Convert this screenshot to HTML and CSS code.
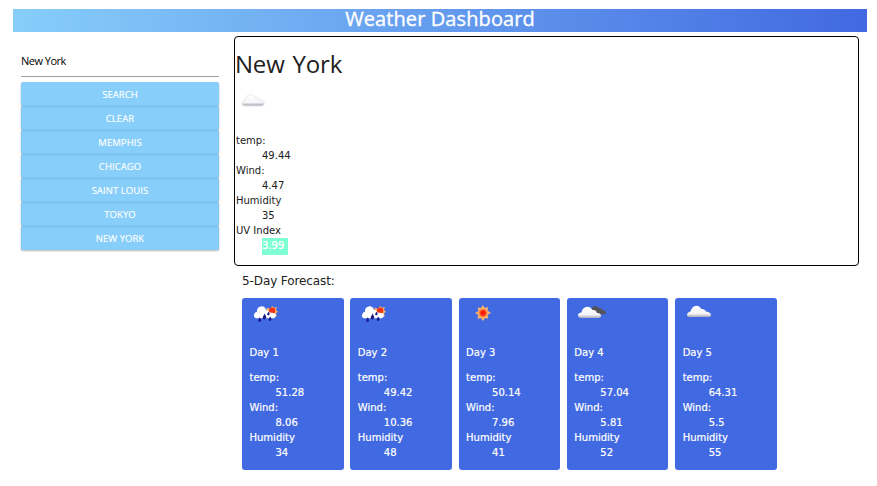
FILE: index.html
```html
<!DOCTYPE html>
<html lang="en">
<head>
<meta charset="utf-8">
<title>Weather Dashboard</title>
<link rel="stylesheet" href="styles.css">
</head>
<body>
<svg class="defs" width="0" height="0" aria-hidden="true">
  <defs>
    <linearGradient id="cloudFill" x1="0" y1="0" x2="0" y2="1">
      <stop offset="0" stop-color="#fff"/><stop offset=".7" stop-color="#f5f5fa"/><stop offset="1" stop-color="#aaa8b4"/>
    </linearGradient>
    <radialGradient id="sunFill"><stop offset=".45" stop-color="#ff1d08"/><stop offset="1" stop-color="#ffad62"/></radialGradient>
    <symbol id="cloud" viewBox="0 0 24 13">
      <path fill="url(#cloudFill)" d="M3 12Q0 12 0 10Q0 7.500 3.500 6.500Q4.500 2 8 1Q12 0 14.500 4Q18 3.500 19 6.500Q24 7 24 10Q24 12 21 12Z"/>
    </symbol>
    <symbol id="rain" viewBox="0 0 26 20">
      <path fill="#ffb267" d="m20 1 2 2 3-1-1 3 2 2-2 2 1 3-3-1-3 2-4-2-1-8 4 1z"/>
      <circle cx="20" cy="6" r="3.300" fill="#ee3518"/>
      <path fill="#fff" d="M3 14Q0 13 1 10Q2 7 4 7Q4 2 8 1.500Q12 1 13.500 5Q16 5 17 8Q22 8 24 10Q24 14 21 14Z"/>
      <g fill="#18188c"><path d="m7 13 1.500 3q-1 2.500-2.500 1.500-1.500-1 0-3zM12 9l2 4q-1 3-3 2-2-1 0-4zM18 12l1.500 3q-1 2.500-2.500 1.500-1.500-1 0-3zM16 7l1.500 2-1 2-2-1z"/></g>
    </symbol>
    <symbol id="sun" viewBox="0 0 16 16">
      <path fill="#ffb36a" d="m8 0 1.700 3L13 2l-.5 3.500L16 8l-3.500 2 .8 3.500L10 13l-2 3-2-3-3.500.8.800-3.800L0 8l3.500-2L2.700 2.500 6 3z"/>
      <circle cx="8" cy="8" r="4.500" fill="url(#sunFill)"/>
    </symbol>
    <symbol id="broken" viewBox="0 0 28 14">
      <path fill="#54545a" d="M13 6Q14 1 17 1L22 3Q24 3 24 5Q28 5 28 8Q27 10 24 9H15Z"/>
      <path fill="url(#cloudFill)" d="M3 13Q0 13 0 10Q0 8 3.500 7.500Q4 3 8 2Q12 1 14.500 5Q18 4.500 19 8Q23 8 23 11Q23 13 20 13Z"/>
    </symbol>
  </defs>
</svg>
<header class="banner"><h1>Weather Dashboard</h1></header>
<main class="layout">
  <aside class="sidebar">
    <input class="city" type="text" value="New York" aria-label="City">
    <button>SEARCH</button><button>CLEAR</button><button>MEMPHIS</button><button>CHICAGO</button><button>SAINT LOUIS</button><button>TOKYO</button><button>NEW YORK</button>
  </aside>
  <div class="content">
    <section class="current">
      <h2>New York</h2>
      <svg class="now-icon" viewBox="0 0 24 13"><use href="#cloud"/></svg>
      <dl><dt>temp:</dt><dd>49.44</dd><dt>Wind:</dt><dd>4.47</dd><dt>Humidity</dt><dd>35</dd><dt>UV Index</dt><dd><span class="uv">3.99</span></dd></dl>
    </section>
    <h3>5-Day Forecast:</h3>
    <section class="forecast">
      <article class="day"><div class="icon"><svg class="rain"><use href="#rain"/></svg></div><h4>Day 1</h4><dl><dt>temp:</dt><dd>51.28</dd><dt>Wind:</dt><dd>8.06</dd><dt>Humidity</dt><dd>34</dd></dl></article>
      <article class="day"><div class="icon"><svg class="rain"><use href="#rain"/></svg></div><h4>Day 2</h4><dl><dt>temp:</dt><dd>49.42</dd><dt>Wind:</dt><dd>10.36</dd><dt>Humidity</dt><dd>48</dd></dl></article>
      <article class="day"><div class="icon"><svg class="sun"><use href="#sun"/></svg></div><h4>Day 3</h4><dl><dt>temp:</dt><dd>50.14</dd><dt>Wind:</dt><dd>7.96</dd><dt>Humidity</dt><dd>41</dd></dl></article>
      <article class="day"><div class="icon"><svg class="broken"><use href="#broken"/></svg></div><h4>Day 4</h4><dl><dt>temp:</dt><dd>57.04</dd><dt>Wind:</dt><dd>5.81</dd><dt>Humidity</dt><dd>52</dd></dl></article>
      <article class="day"><div class="icon"><svg class="cloud"><use href="#cloud"/></svg></div><h4>Day 5</h4><dl><dt>temp:</dt><dd>64.31</dd><dt>Wind:</dt><dd>5.5</dd><dt>Humidity</dt><dd>55</dd></dl></article>
    </section>
  </div>
</main>
</body>
</html>
```
FILE: styles.css
```css
* { box-sizing: border-box; }
body { margin: 0; padding: 9px 10px 0 13px; background: #fff; color: #212121; font: 10px/15px "DejaVu Sans", sans-serif; }
h1, h2, h3, h4, dl, dd { margin: 0; font-weight: 400; }
.defs { display: block; }
.banner { height: 23px; background: linear-gradient(to right, lightskyblue, royalblue); }
h1 { color: #fff; font: 500 20px/20px "Open Sans", sans-serif; letter-spacing: .1px; text-align: center; -webkit-text-stroke: .35px #fff; }
.layout { display: flex; padding: 4px 8px 0; }
.sidebar { width: 198px; display: flex; flex-direction: column; margin-right: 15px; }
.city { height: 32px; margin: 9px 0 5px; padding: 0; border: 0; border-bottom: 1px solid #9e9e9e; color: #000; font: 11px "Open Sans", sans-serif; letter-spacing: -.5px; outline: 0; }
button { height: 24px; padding: 1px 0 0; border: 0; border-radius: 2px; background: lightskyblue; color: #fff; font: 9.500px/23px "Open Sans", sans-serif; letter-spacing: .05px; -webkit-text-stroke: .15px #fff; box-shadow: 0 1px 2px rgba(0,0,0,.2), 0 1px 2px rgba(0,0,0,.1); }
button + button { box-shadow: inset 0 1px 1px rgba(0,60,110,.12), 0 1px 2px rgba(0,0,0,.2), 0 1px 2px rgba(0,0,0,.1); }
.content { width: 625px; }
.current { height: 230px; border: 1px solid #000; border-radius: 4px; padding-top: 11px; }
h2 { font: 24px/32px "Open Sans", sans-serif; letter-spacing: -.2px; word-spacing: 2px; }
.now-icon { display: block; width: 22px; height: 13px; margin: 14px 0 26px 7px; filter: drop-shadow(0 0 1px #ccc); }
dt, dd { height: 15px; }
dd { padding-left: 26px; }
.current dl { padding-left: 1px; }
.uv { display: inline-block; height: 17px; width: 26px; background: aquamarine; color: #fff; -webkit-text-stroke: .25px #fff; }
h3 { margin-left: 8px; font-size: 12px; line-height: 30px; height: 32px; letter-spacing: -.1px; }
.forecast { display: flex; gap: 6.700px; margin-left: 8px; }
.day { width: 101.600px; height: 172px; flex: none; padding: 7px 7px 0 7.500px; border-radius: 3px; background: royalblue; color: #fff; -webkit-text-stroke: .2px #fff; }
.icon { height: 40px; padding-left: 4px; }
.icon svg { display: block; }
.icon .rain { width: 25px; height: 19px; margin-left: -1px; }
.sun { width: 16px; height: 16px; margin-left: 5px; }
.broken { width: 28px; height: 14px; }
.cloud { width: 24px; height: 13px; }
h4 { font-size: 10px; line-height: 15px; margin-bottom: 10px; }
```
